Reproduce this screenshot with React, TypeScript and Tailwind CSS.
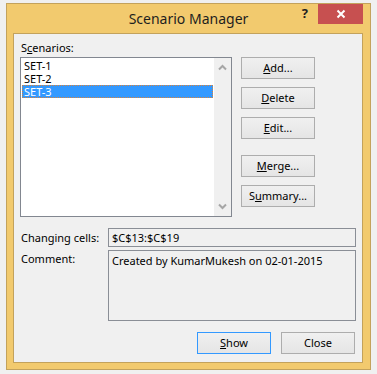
const buttons = [
  { id: 'add', pre: '', key: 'A', post: 'dd...', gap: false },
  { id: 'delete', pre: '', key: 'D', post: 'elete', gap: false },
  { id: 'edit', pre: '', key: 'E', post: 'dit...', gap: false },
  { id: 'merge', pre: '', key: 'M', post: 'erge...', gap: true },
  { id: 'summary', pre: 'S', key: 'u', post: 'mmary...', gap: false },
];

const scenarios = ['SET-1', 'SET-2', 'SET-3'];

const DlgButton = ({ children, primary }: { children: React.ReactNode; primary?: boolean }) => (
  <div
    className={`w-[74px] h-[22px] flex items-center justify-center border text-[11px] text-black bg-linear-to-b from-[#f0f0f0] to-[#e5e5e5] ${
      primary ? 'border-[#3399ff]' : 'border-[#adadad]'
    }`}
  >
    {children}
  </div>
);

const Chevron = ({ down }: { down?: boolean }) => (
  <svg width="9" height="7" viewBox="0 0 9 7">
    <polyline
      points={down ? '1,1.5 4.5,5 8,1.5' : '1,5.5 4.5,2 8,5.5'}
      fill="none"
      stroke="#a6a6a6"
      strokeWidth="2"
    />
  </svg>
);

export default function App() {
  return (
    <div className="w-[377px] h-[374px] bg-[#f0f0f0] pt-[3px] pl-[6px] font-['Noto_Sans',sans-serif]">
      <div className="w-[365px] h-[367px] border border-[#c3a25c] bg-[#f2ca6e] flex flex-col">
        {/* Title bar */}
        <div className="h-[29px] shrink-0 grid grid-cols-[1fr_auto_1fr]">
          <div />
          <div className="text-[14px] leading-[29px] text-[#1e1e1e]">Scenario Manager</div>
          <div className="flex justify-end items-start pr-[7px]">
            <span className="mt-[1px] mr-[10px] text-[13px] leading-[16px] font-bold text-[#1e1e1e]">?</span>
            <div className="w-[45px] h-[20px] bg-[#c75050] flex items-center justify-center">
              <svg width="10" height="10" viewBox="0 0 10 10">
                <path d="M1.5 1.5 L8.5 8.5 M8.5 1.5 L1.5 8.5" stroke="#fff" strokeWidth="2" />
              </svg>
            </div>
          </div>
        </div>

        {/* Client */}
        <div className="ml-[6px] w-[350px] h-[330px] border border-[#c3a25c] bg-[#f0f0f0] pl-[6px] pt-[6px] flex flex-col text-[11px] text-black">
          <div className="flex">
            <div className="w-[212px]">
              <div className="h-[17px] leading-[15px] pl-[1px]">
                S<span className="underline">c</span>enarios:
              </div>
              <div className="h-[160px] border border-[#828790] flex">
                <div className="flex-1 bg-white px-[1px] pt-[1px]">
                  {scenarios.map((s, i) => {
                    const sel = i === scenarios.length - 1;
                    return (
                      <div
                        key={s}
                        className={`h-[13px] leading-[13px] pl-[2px] ${
                          sel
                            ? 'bg-[#3399ff] text-white outline outline-dotted outline-[#d9823a] -outline-offset-1'
                            : ''
                        }`}
                      >
                        {s}
                      </div>
                    );
                  })}
                </div>
                <div className="w-[17px] bg-[#f0f0f0] flex flex-col items-center justify-between pt-[6px] pb-[6px]">
                  <Chevron />
                  <Chevron down />
                </div>
              </div>
            </div>

            <div className="ml-[9px] mt-[17px] flex flex-col">
              {buttons.map((b) => (
                <div key={b.id} className={b.gap ? 'mt-[16px]' : b.id === 'add' ? '' : 'mt-[8px]'}>
                  <DlgButton>
                    {b.pre}
                    <span className="underline">{b.key}</span>
                    {b.post}
                  </DlgButton>
                </div>
              ))}
            </div>
          </div>

          {/* Changing cells */}
          <div className="mt-[11px] flex items-center">
            <div className="w-[88px] leading-[15px] pl-[1px]">Changing cells:</div>
            <div className="w-[248px] h-[19px] border border-[#8a8e96] bg-[#f0f0f0] pl-[3px] leading-[17px]">
              $C$13:$C$19
            </div>
          </div>

          {/* Comment */}
          <div className="mt-[3px] flex items-start">
            <div className="w-[88px] leading-[15px] pl-[1px] pt-[1px]">Comment:</div>
            <div className="w-[248px] h-[71px] border border-[#8a8e96] bg-[#f0f0f0] pl-[3px] pt-[2px] leading-[15px]">
              Created by KumarMukesh on 02-01-2015
            </div>
          </div>

          {/* Footer buttons */}
          <div className="mt-[11px] flex justify-end gap-[10px] pr-[7px]">
            <DlgButton primary>
              <span className="underline">S</span>how
            </DlgButton>
            <DlgButton>Close</DlgButton>
          </div>
        </div>
      </div>
    </div>
  );
}
